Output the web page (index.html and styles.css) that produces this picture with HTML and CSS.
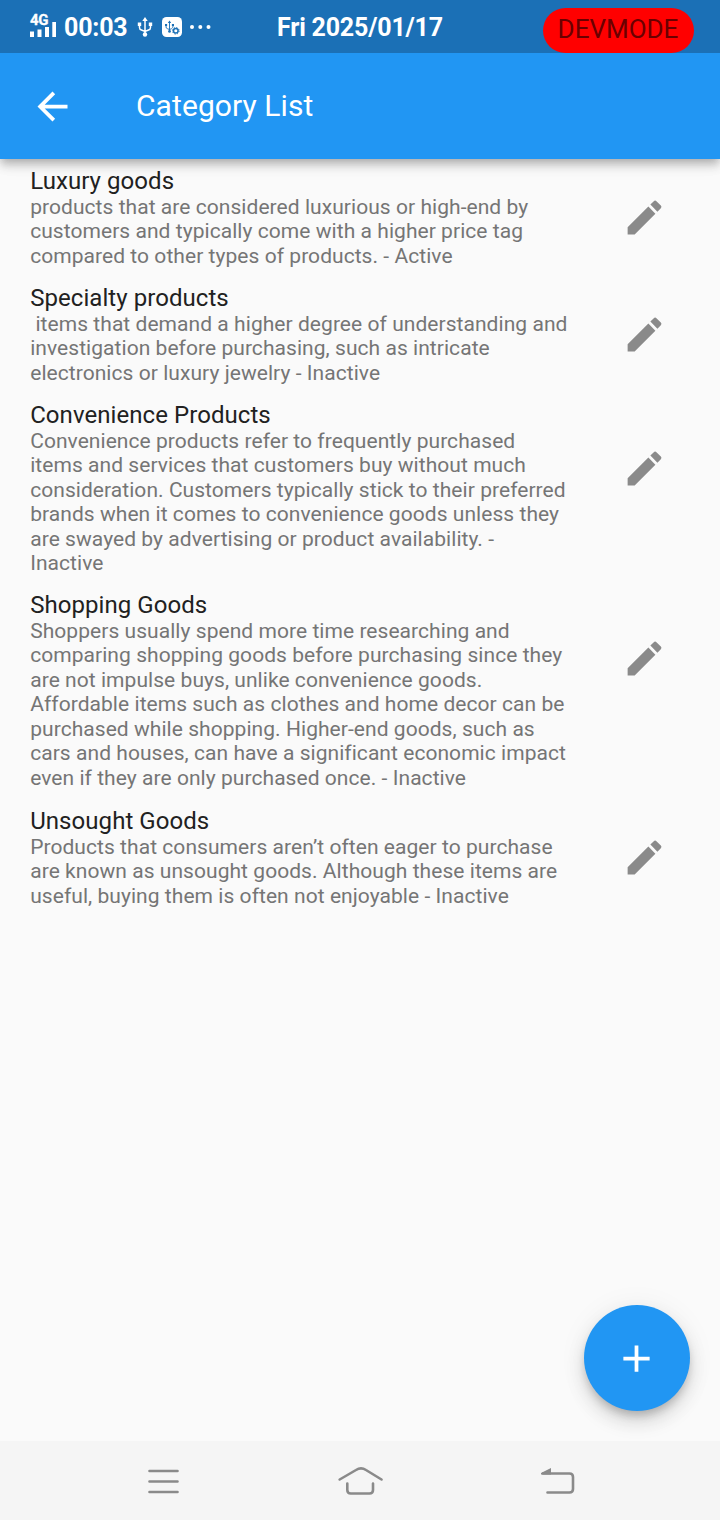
FILE: index.html
```html
<!DOCTYPE html>
<html lang="en">
<head>
<meta charset="utf-8">
<title>Category List</title>
<link rel="stylesheet" href="styles.css">
</head>
<body>
<svg width="0" height="0" class="defs"><defs>
<symbol id="edit" viewBox="0 0 24 24"><path d="M3 17.25V21h3.75L17.81 9.94l-3.75-3.75L3 17.25zM20.71 7.04c.39-.39.39-1.02 0-1.41l-2.34-2.34c-.39-.39-1.02-.39-1.41 0l-1.83 1.83 3.75 3.75 1.83-1.83z"/></symbol>
<symbol id="usb" viewBox="0 0 16 20"><path d="M8 3v14M2.500 7v3.500q0 2 2 2.500L8 14.500l3.500-1.500q2-.5 2-2.500V7" fill="none" stroke="currentColor" stroke-width="1.500"/><path d="M8 0l2.700 4H5.300zM.8 5.500h3.400v3.400H.8zM11.800 5.500h3.400v3.400h-3.400z" fill="currentColor"/><circle cx="8" cy="17.500" r="2.200" fill="currentColor"/></symbol>
</defs></svg>
<div class="screen">
  <header class="status">
    <div class="signal"><span class="net">4G</span><svg width="26" height="16" viewBox="0 0 26 16"><path d="M0 10.500h4V16H0zM7.500 8.500h4V16h-4zM15 6h4v10h-4zM22.300 1h3.700v15h-3.700z" fill="#fff"/></svg></div>
    <span class="clock">00:03</span>
    <svg class="usb" width="16" height="20"><use href="#usb"/></svg>
    <svg class="debug" width="20" height="20" viewBox="0 0 20 20"><rect width="20" height="20" rx="4.500" fill="#fff"/><g color="#1b70b6"><use href="#usb" x="2.500" y="2.500" width="10" height="14.500"/></g><circle cx="13.800" cy="13.800" r="4.200" fill="#fff"/><circle cx="13.800" cy="13.800" r="2.300" fill="none" stroke="#1b70b6" stroke-width="1.500"/><circle cx="13.800" cy="13.800" r="3.300" fill="none" stroke="#1b70b6" stroke-width="1" stroke-dasharray="1.300 1.300"/></svg>
    <svg class="dots" width="21" height="4"><circle cx="2" cy="2" r="2"/><circle cx="10.300" cy="2" r="2"/><circle cx="18.500" cy="2" r="2"/></svg>
    <span class="date">Fri 2025/01/17</span>
    <span class="dev">DEVMODE</span>
  </header>
  <div class="appbar">
    <svg width="45" height="45" viewBox="0 0 24 24"><path fill="#fff" d="M20 11H7.830l5.590-5.590L12 4l-8 8 8 8 1.410-1.410L7.830 13H20v-2z"/></svg>
    <h1>Category List</h1>
  </div>
  <main class="list">
    <article class="item">
      <div class="text"><h2>Luxury goods</h2><p>products that are considered luxurious or high-end by<br>customers and typically come with a higher price tag<br>compared to other types of products. - Active</p></div>
      <svg class="edit"><use href="#edit"/></svg>
    </article>
    <article class="item">
      <div class="text"><h2>Specialty products</h2><p>&nbsp;items that demand a higher degree of understanding and<br>investigation before purchasing, such as intricate<br>electronics or luxury jewelry - Inactive</p></div>
      <svg class="edit"><use href="#edit"/></svg>
    </article>
    <article class="item tall">
      <div class="text"><h2>Convenience Products</h2><p>Convenience products refer to frequently purchased<br>items and services that customers buy without much<br>consideration. Customers typically stick to their preferred<br>brands when it comes to convenience goods unless they<br>are swayed by advertising or product availability. -<br>Inactive</p></div>
      <svg class="edit"><use href="#edit"/></svg>
    </article>
    <article class="item taller">
      <div class="text"><h2>Shopping Goods</h2><p>Shoppers usually spend more time researching and<br>comparing shopping goods before purchasing since they<br>are not impulse buys, unlike convenience goods.<br>Affordable items such as clothes and home decor can be<br>purchased while shopping. Higher-end goods, such as<br>cars and houses, can have a significant economic impact<br>even if they are only purchased once. - Inactive</p></div>
      <svg class="edit"><use href="#edit"/></svg>
    </article>
    <article class="item">
      <div class="text"><h2>Unsought Goods</h2><p>Products that consumers aren’t often eager to purchase<br>are known as unsought goods. Although these items are<br>useful, buying them is often not enjoyable - Inactive</p></div>
      <svg class="edit"><use href="#edit"/></svg>
    </article>
  </main>
  <button class="fab" aria-label="Add"><svg width="45" height="45" viewBox="0 0 24 24"><path fill="#fff" d="M19 13h-6v6h-2v-6H5v-2h6V5h2v6h6v2z"/></svg></button>
  <nav class="nav">
    <svg width="32" height="28" viewBox="0 0 32 28"><path d="M1.500 4h28M1.500 14.500h28M1.500 25h28"/></svg>
    <svg width="46" height="30" viewBox="0 0 46 30"><path d="M1.700 13.500L18 4q5-3.300 10 0l15.500 9.500M9.300 17.500V24q0 3.500 3.500 3.500H31.500q3.500 0 3.500-3.500v-6.500"/></svg>
    <svg width="34" height="28" viewBox="0 0 34 28"><path d="M2 6.500h26.500q3.500 0 3.500 3.500v12q0 3.500-3.500 3.500H6.500"/><path class="tip" d="M0 7.600V6L10 1v6.600z"/></svg>
  </nav>
</div>
</body>
</html>
```
FILE: styles.css
```css
* { box-sizing: border-box; }
body { margin: 0; font-family: Roboto, sans-serif; background: #fafafa; }
svg { display: block; flex: none; }
.defs { position: absolute; }
.screen { position: relative; display: flex; flex-direction: column; width: 720px; height: 1520px; overflow: hidden; }
.status { display: flex; height: 53px; background: #1b70b6; color: #fff; padding-left: 30px; white-space: nowrap; position: relative; z-index: 2; }
.signal { width: 26px; padding-top: 13px; flex: none; }
.net { display: block; height: 8px; font-size: 15px; line-height: 14px; font-weight: 700; -webkit-text-stroke: .3px #fff; letter-spacing: -.3px; }
.clock, .date { font-size: 25px; line-height: 30px; font-weight: 700; margin-top: 13px; letter-spacing: -.2px; }
.clock { width: 64px; margin-left: 8px; }
.usb { margin: 17px 0 0 9px; }
.debug { margin: 17px 0 0 9px; }
.dots { margin: 25px 0 0 8px; fill: #fff; }
.date { width: 170px; margin-left: 66px; }
.dev { width: 151px; height: 45px; margin: 8px 0 0 96px; padding-right: 1px; border-radius: 23px; background: #f00; color: #6b0000; font-size: 26px; line-height: 43px; text-align: center; flex: none; }
.appbar { display: flex; align-items: center; height: 105.500px; flex: none; padding: 1px 0 0 30px; background: #2196f3; color: #fff; position: relative; z-index: 1; box-shadow: 0 4px 8px -2px rgba(0,0,0,.2), 0 8px 9px rgba(0,0,0,.12), 0 2px 18px rgba(0,0,0,.08); }
h1 { margin: -1px 0 0 61px; font-size: 30px; line-height: 36px; font-weight: 400; letter-spacing: .08px; }
.list { flex: 1; }
.item { display: flex; align-items: center; justify-content: space-between; height: 117px; padding: 0 53.500px 0 30.200px; }
.item.tall, .item.taller { align-items: flex-start; }
.item.tall { height: 190px; }
.item.taller { height: 216px; }
.text { align-self: flex-start; padding-top: 8px; white-space: nowrap; }
h2 { margin: 0; font-size: 24px; line-height: 28px; font-weight: 400; color: #212121; letter-spacing: .06px; }
p { margin: 0; font-size: 21px; line-height: 24.500px; color: #757575; letter-spacing: .052px; }
.edit { width: 45px; height: 45px; fill: #8a8a8a; }
.tall .edit, .taller .edit { margin-top: 53px; }
.fab { position: absolute; left: 584px; top: 1305px; width: 106px; height: 106px; border: 0; padding: 0 1px 0 0; border-radius: 50%; background: #2196f3; display: flex; align-items: center; justify-content: center; box-shadow: 0 6px 9px -2px rgba(0,0,0,.2), 0 11px 19px rgba(0,0,0,.13), 0 2px 30px rgba(0,0,0,.06); }
.nav { display: flex; height: 79px; flex: none; align-items: center; background: #f5f5f5; padding: 1px 0 0 148px; }
.nav path { fill: none; stroke: #8a8a8a; stroke-width: 2.600; stroke-linecap: round; }
.nav .tip { fill: #8a8a8a; stroke: none; }
.nav svg + svg { margin-left: 158px; }
.nav svg + svg + svg { margin-left: 156.500px; }
```
